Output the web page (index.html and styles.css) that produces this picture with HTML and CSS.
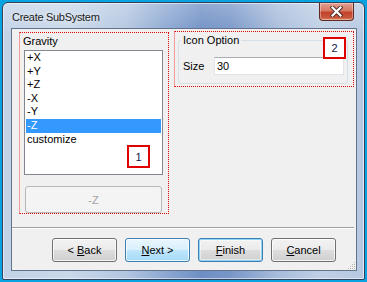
FILE: index.html
```html
<!DOCTYPE html>
<html>
<head>
<meta charset="utf-8">
<link rel="stylesheet" href="styles.css">
</head>
<body>
<div class="window">
  <div class="titlebar">
    <span class="title">Create SubSystem</span>
    <div class="close">
      <svg width="13" height="11" viewBox="0 0 13 11">
        <path d="M2.5 1.5 L10.5 9.5 M10.5 1.5 L2.5 9.5" stroke="#4a2a28" stroke-width="4" stroke-linecap="square" fill="none"/>
        <path d="M2.5 1.5 L10.5 9.5 M10.5 1.5 L2.5 9.5" stroke="#ffffff" stroke-width="2.2" stroke-linecap="square" fill="none"/>
      </svg>
    </div>
  </div>
  <div class="client">
    <div class="panels">
      <div class="mark mark-gravity">
        <div class="label">Gravity</div>
        <div class="listbox">
          <div class="item">+X</div>
          <div class="item">+Y</div>
          <div class="item">+Z</div>
          <div class="item">-X</div>
          <div class="item">-Y</div>
          <div class="item selected">-Z</div>
          <div class="item">customize</div>
          <div class="badge badge-1">1</div>
        </div>
        <div class="btn-disabled">-Z</div>
      </div>
      <div class="mark mark-icon">
        <fieldset class="group">
          <legend>Icon Option</legend>
          <div class="field-row">
            <span class="field-label">Size</span>
            <div class="textbox">30</div>
          </div>
        </fieldset>
        <div class="badge badge-2">2</div>
      </div>
    </div>
    <div class="separator"></div>
    <div class="buttons">
      <div class="btn"><span>&lt;&nbsp;<u>B</u>ack</span></div>
      <div class="btn btn-hover"><span><u>N</u>ext&nbsp;&gt;</span></div>
      <div class="btn btn-default"><span><u>F</u>inish</span></div>
      <div class="btn"><span><u>C</u>ancel</span></div>
    </div>
    <svg class="grip" width="10" height="10" viewBox="0 0 10 10">
      <rect x="8" y="2" width="1" height="1" fill="#b8b8b8"/>
      <rect x="6" y="4" width="1" height="1" fill="#b8b8b8"/>
      <rect x="8" y="4" width="1" height="1" fill="#b8b8b8"/>
      <rect x="4" y="6" width="1" height="1" fill="#b8b8b8"/>
      <rect x="6" y="6" width="1" height="1" fill="#b8b8b8"/>
      <rect x="8" y="6" width="1" height="1" fill="#b8b8b8"/>
      <rect x="2" y="8" width="1" height="1" fill="#b8b8b8"/>
      <rect x="4" y="8" width="1" height="1" fill="#b8b8b8"/>
      <rect x="6" y="8" width="1" height="1" fill="#b8b8b8"/>
      <rect x="8" y="8" width="1" height="1" fill="#b8b8b8"/>
    </svg>
  </div>
</div>
</body>
</html>
```

FILE: styles.css
```css
html, body {
  margin: 0;
  padding: 0;
}
body {
  background: #0aa3e2;
  width: 367px;
  height: 282px;
  padding: 2px 0 0 2px;
  box-sizing: border-box;
  overflow: hidden;
  font-family: "Liberation Sans", Arial, sans-serif;
  font-size: 11px;
  color: #000;
}
.window {
  width: 363px;
  height: 278px;
  box-sizing: border-box;
  border: 1px solid #31435c;
  border-radius: 6px 6px 2px 2px;
  background:
    linear-gradient(180deg, rgba(255,255,255,0.25) 0%, rgba(255,255,255,0) 12%),
    linear-gradient(90deg, #c2d2e7 0%, #c9d8ea 18%, #b3c6e0 34%, #8ca8d2 45%, #6f8fc4 55%, #7896c8 63%, #a7bcdb 76%, #bfcfe5 88%, #b6c8e1 100%);
  box-shadow: inset 0 0 0 1px rgba(255,255,255,0.55);
  display: flex;
  flex-direction: column;
}
.titlebar {
  height: 25px;
  display: flex;
  justify-content: space-between;
  align-items: flex-start;
  padding-left: 9px;
}
.title {
  margin-top: 7px;
  line-height: 14px;
  font-size: 11px;
  letter-spacing: -0.3px;
  color: #1a1a1a;
  text-shadow: 0 0 4px rgba(255,255,255,0.9);
}
.close {
  width: 35px;
  height: 18px;
  box-sizing: border-box;
  margin-right: 10px;
  border: 1px solid #5e2a22;
  border-top: none;
  border-radius: 0 0 4px 4px;
  background: linear-gradient(180deg, #e3a293 0%, #d57862 45%, #c2422b 55%, #c8553a 85%, #de8a6a 100%);
  box-shadow: inset 0 0 0 1px rgba(255,255,255,0.35);
  display: flex;
  align-items: center;
  justify-content: center;
}
.client {
  position: relative;
  margin: 0 7px 8px 8px;
  height: 243px;
  box-sizing: border-box;
  border: 1px solid #62738a;
  background: #f0f0f0;
  display: flex;
  flex-direction: column;
}
.panels {
  display: flex;
  align-items: flex-start;
  padding: 2px 0 0 7px;
  gap: 5px;
}
.mark {
  position: relative;
  box-sizing: border-box;
  border: 1px dotted #e00000;
  border-left: 1px solid #f39a9a;
}
.mark-gravity {
  width: 150px;
  height: 182px;
  margin-top: 1px;
  display: flex;
  flex-direction: column;
  align-items: flex-start;
}
.label {
  margin: 2px 0 0 3px;
  line-height: 13px;
}
.listbox {
  position: relative;
  margin: 2px 0 0 4px;
  width: 139px;
  height: 125px;
  box-sizing: border-box;
  border: 1px solid #828790;
  background: #fff;
  padding: 0 1px;
}
.item {
  height: 13.6px;
  line-height: 13.6px;
  padding-left: 1px;
}
.item.selected {
  background: #3399ff;
  color: #fff;
}
.badge {
  position: absolute;
  box-sizing: border-box;
  border: 2px solid #e00000;
  background: #fff;
  color: #151548;
  font-size: 11px;
  display: flex;
  align-items: center;
  justify-content: center;
}
.badge-1 {
  left: 102px;
  top: 94px;
  width: 23px;
  height: 23px;
}
.badge-2 {
  left: 148px;
  top: 5px;
  width: 23px;
  height: 22px;
}
.btn-disabled {
  margin: 11px 0 0 5px;
  width: 137px;
  height: 27px;
  box-sizing: border-box;
  border: 1px solid #b5b9bc;
  border-radius: 3px;
  background: #f4f4f4;
  color: #a3a3a3;
  display: flex;
  align-items: center;
  justify-content: center;
}
.mark-icon {
  width: 180px;
  height: 56px;
}
.group {
  margin: 2px 5px 2px 3px;
  width: 170px;
  box-sizing: border-box;
  border: 1px solid #d5dfe5;
  border-radius: 3px;
  padding: 0 0 8px 2px;
  min-width: 0;
}
.group legend {
  padding: 0 2px;
  line-height: 13px;
  font-size: 11px;
}
.field-row {
  display: flex;
  align-items: center;
  margin: 10px 0 0 2px;
}
.field-label {
  width: 31px;
}
.textbox {
  width: 130px;
  height: 18px;
  box-sizing: border-box;
  border: 1px solid #e2e3ea;
  border-top-color: #abadb3;
  background: #fff;
  padding-left: 2px;
  line-height: 16px;
}
.separator {
  margin: 13px 2px 0 0;
  height: 0;
  border-top: 1px solid #a0a0a0;
  border-bottom: 1px solid #ffffff;
}
.buttons {
  display: flex;
  justify-content: flex-end;
  gap: 8px;
  padding-right: 20px;
  margin-top: 9px;
}
.btn {
  width: 65px;
  height: 24px;
  box-sizing: border-box;
  border: 1px solid #707070;
  border-radius: 3px;
  background: linear-gradient(180deg, #f2f2f2 0%, #ebebeb 48%, #dddddd 52%, #cfcfcf 100%);
  box-shadow: inset 0 0 0 1px rgba(255,255,255,0.75);
  display: flex;
  align-items: center;
  justify-content: center;
  color: #000;
}
.btn u {
  text-decoration: underline;
  text-underline-offset: 1px;
}
.btn-hover {
  border-color: #3c7fb1;
  background: linear-gradient(180deg, #eaf6fd 0%, #d9f0fc 48%, #bee6fd 52%, #a7d9f5 100%);
}
.btn-default {
  border-color: #3c7fb1;
  background: linear-gradient(180deg, #f2f2f2 0%, #ebebeb 48%, #dddddd 52%, #cfcfcf 100%);
  box-shadow: inset 0 0 0 1px #8fd3f5, inset 0 0 0 2px rgba(255,255,255,0.5);
}
.grip {
  position: absolute;
  right: 0;
  bottom: 0;
}
```
